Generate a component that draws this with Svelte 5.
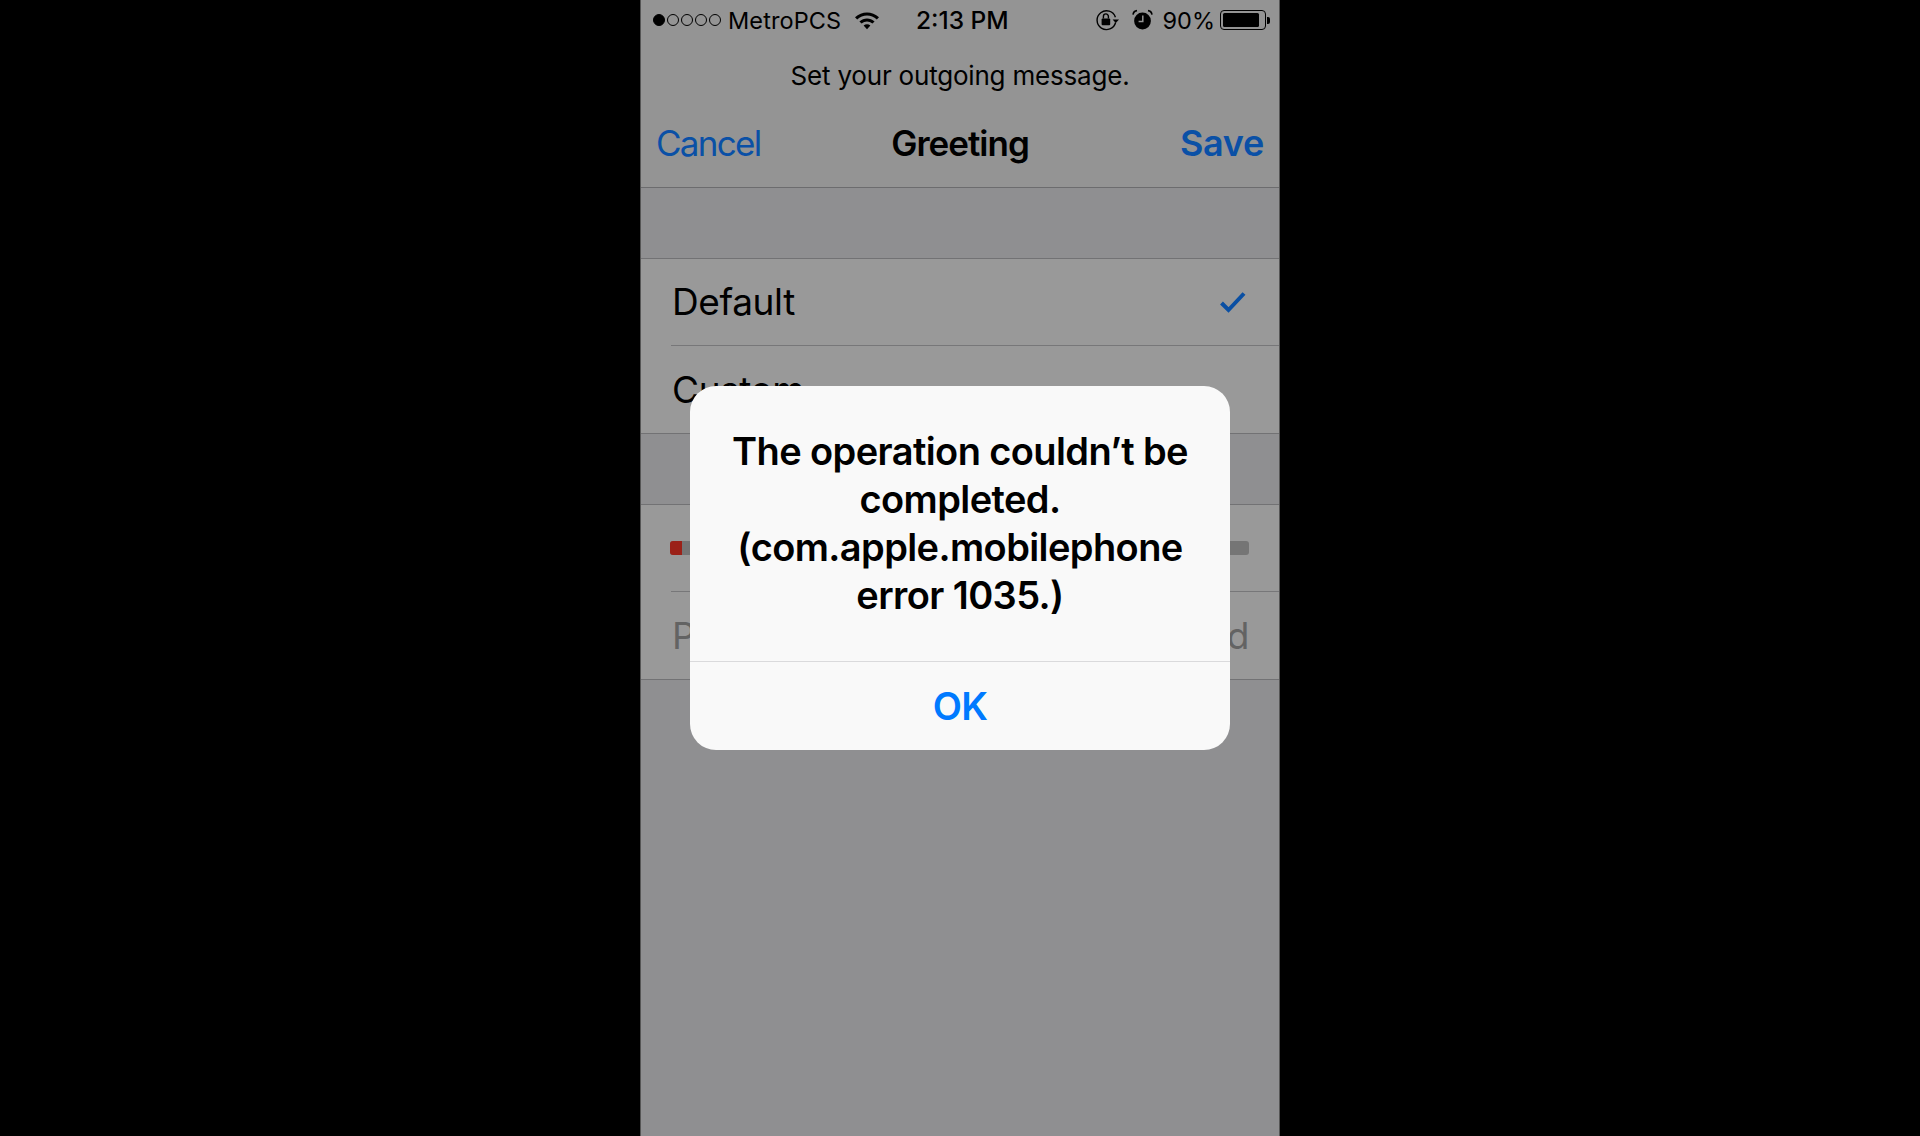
<script>
  const dots = [true, false, false, false, false];
</script>

<div class="page">
  <div class="phone">
    <header class="top">
      <div class="status">
        <div class="left">
          <div class="dots">
            {#each dots as on}
              <span class="dot" class:on></span>
            {/each}
          </div>
          <span class="carrier">MetroPCS</span>
          <svg class="wifi" width="26" height="20" viewBox="0 0 26 20">
            <path d="M1 7.2C7.8 .9 18.2 .9 25 7.2L22.8 9.4C17.2 4.3 8.8 4.3 3.2 9.4Z" fill="#000"/>
            <path d="M5.4 11.4C9.8 7.4 16.2 7.4 20.6 11.4L18.4 13.6C15.2 10.8 10.8 10.8 7.6 13.6Z" fill="#000"/>
            <path d="M9.6 15.4C11.6 13.8 14.4 13.8 16.4 15.4L13 19.2Z" fill="#000"/>
          </svg>
        </div>
        <span class="time">2:13 PM</span>
        <div class="right">
          <svg class="lock" width="25" height="22" viewBox="0 0 25 22">
            <path d="M20.6 13.5A9.4 9.4 0 1 1 20.4 8.2" fill="none" stroke="#000" stroke-width="1.4"/>
            <path d="M17.6 10.4H24L20.8 14Z" fill="#000"/>
            <rect x="6.6" y="9.4" width="8.6" height="6.8" rx="1" fill="#000"/>
            <path d="M8.4 9.6V7.4a2.5 2.5 0 0 1 5 0V9.6" fill="none" stroke="#000" stroke-width="1.4"/>
          </svg>
          <svg class="alarm" width="21" height="22" viewBox="0 0 21 22">
            <circle cx="10.5" cy="12" r="8.4" fill="#000"/>
            <path d="M10.8 6.6V12.6H6.6" fill="none" stroke="#949494" stroke-width="1.5"/>
            <path d="M1 5.6C1.4 3.2 3 1.8 5 1.6" fill="none" stroke="#000" stroke-width="1.6"/>
            <path d="M20 5.6C19.6 3.2 18 1.8 16 1.6" fill="none" stroke="#000" stroke-width="1.6"/>
          </svg>
          <span class="pct">90%</span>
          <div class="battery">
            <div class="cell"><div class="charge"></div></div>
            <div class="nub"></div>
          </div>
        </div>
      </div>
      <p class="prompt">Set your outgoing message.</p>
      <nav class="nav">
        <span class="cancel">Cancel</span>
        <span class="title">Greeting</span>
        <span class="save">Save</span>
      </nav>
    </header>

    <div class="gap first"></div>

    <section class="group">
      <div class="row inset lifted">
        <span>Default</span>
        <svg class="check" width="28" height="22" viewBox="0 0 28 22">
          <path d="M2.5 12L9.5 19L25 2.5" fill="none" stroke="#0a4fa3" stroke-width="4"/>
        </svg>
      </div>
      <div class="row"><span>Custom</span></div>
    </section>

    <div class="gap second"></div>

    <section class="group">
      <div class="row slider inset">
        <div class="track"><div class="played"></div></div>
      </div>
      <div class="row controls">
        <span>Play</span>
        <span>Record</span>
      </div>
    </section>

    <div class="dialog">
      <div class="message">The operation couldn’t be completed. (com.apple.mobilephone error 1035.)</div>
      <div class="ok">OK</div>
    </div>
  </div>
</div>

<style>
  :global(body) {
    margin: 0;
    background: #000;
  }

  .page {
    display: flex;
    justify-content: center;
    height: 1136px;
    background: #000;
    font-family: Inter, "Liberation Sans", sans-serif;
    color: #000;
  }

  .phone {
    position: relative;
    box-sizing: border-box;
    width: 640px;
    height: 1136px;
    background: #8f8f91;
    border-left: 1px solid #555;
    border-right: 1px solid #555;
    overflow: hidden;
  }

  .top {
    background: #949494;
    height: 188px;
    box-sizing: border-box;
    border-bottom: 1px solid #6c6c6e;
    display: flex;
    flex-direction: column;
  }

  .status {
    height: 40px;
    position: relative;
    display: flex;
    align-items: center;
    justify-content: space-between;
    padding: 0 9px 0 12px;
    font-size: 24px;
  }

  .left, .right {
    display: flex;
    align-items: center;
  }

  .dots {
    display: flex;
    gap: 2px;
  }

  .dot {
    width: 10px;
    height: 10px;
    border: 1px solid #000;
    border-radius: 50%;
    box-sizing: content-box;
  }

  .dot.on {
    background: #000;
  }

  .carrier {
    margin-left: 7px;
    font-size: 23.5px;
    letter-spacing: 0.1px;
  }

  .wifi {
    margin-left: 13px;
  }

  .time {
    position: absolute;
    left: 275px;
    font-weight: 500;
    font-size: 24.5px;
  }

  .lock {
    margin-right: 12px;
  }

  .alarm {
    margin-right: 10px;
  }

  .pct {
    font-size: 23.5px;
  }

  .battery {
    display: flex;
    align-items: center;
    margin-left: 5px;
  }

  .cell {
    box-sizing: border-box;
    width: 46px;
    height: 20px;
    border: 1px solid #000;
    border-radius: 4px;
    padding: 2px;
  }

  .charge {
    width: 90%;
    height: 100%;
    background: #000;
    border-radius: 1.5px;
  }

  .nub {
    width: 3px;
    height: 7px;
    background: #000;
    border-radius: 0 2px 2px 0;
    margin-left: 1px;
  }

  .prompt {
    margin: 20px 0 0;
    text-align: center;
    font-size: 26px;
    letter-spacing: -0.2px;
    line-height: 32px;
  }

  .nav {
    position: relative;
    display: flex;
    justify-content: space-between;
    align-items: center;
    margin-top: 29px;
    padding: 0 15px 0 15px;
    font-size: 35px;
    line-height: 44px;
  }

  .cancel {
    color: #0a50a6;
    letter-spacing: -1.7px;
  }

  .save {
    color: #0a50a6;
    font-size: 36px;
    font-weight: 600;
    letter-spacing: -0.3px;
  }

  .title {
    position: absolute;
    left: 0;
    right: 0;
    text-align: center;
    font-weight: 600;
    letter-spacing: -1px;
  }

  .gap.first {
    height: 70px;
  }

  .gap.second {
    height: 70px;
  }

  .group {
    background: #999;
    border-top: 1px solid #727274;
    border-bottom: 1px solid #727274;
  }

  .row {
    position: relative;
    box-sizing: border-box;
    height: 87px;
    display: flex;
    align-items: center;
    justify-content: space-between;
    padding: 0 30px 0 31px;
    font-size: 37px;
    letter-spacing: -0.4px;
  }

  .row.lifted > span {
    position: relative;
    top: -1px;
  }

  .row.inset::after {
    content: "";
    position: absolute;
    left: 30px;
    right: 0;
    bottom: 0;
    height: 1px;
    background: #777779;
  }

  .check {
    margin-right: 2px;
    position: relative;
    top: -1px;
  }

  .track {
    flex: 1;
    height: 14px;
    margin: -2px 0 0 -2px;
    background: #757575;
    border-radius: 3px;
    overflow: hidden;
  }

  .played {
    width: 12px;
    height: 100%;
    background: #9b2118;
  }

  .controls {
    color: #636363;
  }

  .dialog {
    position: absolute;
    left: 49px;
    top: 386px;
    width: 540px;
    height: 364px;
    border-radius: 26px;
    background: #f9f9f9;
    display: flex;
    flex-direction: column;
  }

  .message {
    box-sizing: border-box;
    height: 276px;
    padding: 41px 30px 0;
    text-align: center;
    font-size: 38px;
    line-height: 48px;
    font-weight: 600;
    letter-spacing: -0.6px;
    border-bottom: 1px solid #dadadc;
  }

  .ok {
    flex: 1;
    display: flex;
    align-items: center;
    justify-content: center;
    color: #007aff;
    font-size: 38px;
    font-weight: 600;
    letter-spacing: -0.8px;
  }
</style>
